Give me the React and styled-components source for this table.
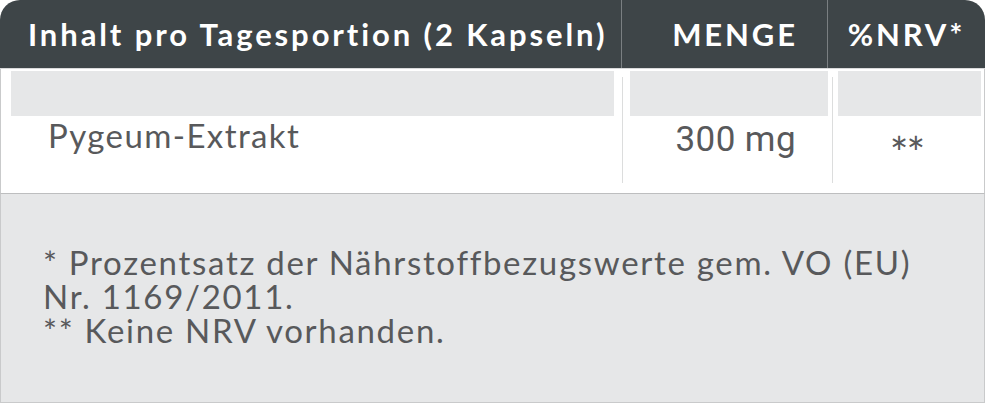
import React from 'react'
import styled, { createGlobalStyle } from 'styled-components'

const GlobalStyle = createGlobalStyle`
  body {
    margin: 0;
    background: #ffffff;
    font-family: Lato, "Noto Sans", sans-serif;
  }
`

const Card = styled.div`
  width: 985px;
  height: 403px;
  box-sizing: border-box;
  display: flex;
  flex-direction: column;
`

const Head = styled.div`
  display: grid;
  grid-template-columns: 621px 206px 1fr;
  height: 68px;
  background: #3e4548;
  border-radius: 20px 20px 0 0;
  border-bottom: 1px solid #d9dadb;
`

const HeadCell = styled.div`
  display: flex;
  align-items: center;
  justify-content: ${(props) => props.align || 'flex-start'};
  padding: ${(props) => props.pad || '0'};
  border-left: ${(props) => (props.divider ? '1px solid #7a7f82' : 'none')};
  color: #ffffff;
  font-family: Lato, "Noto Sans", sans-serif;
  font-weight: 700;
  font-size: 31px;
  letter-spacing: 2.9px;
  white-space: nowrap;
`

const Row = styled.div`
  display: grid;
  grid-template-columns: 621px 206px 1fr;
  height: 124px;
  border-left: 1px solid #c9cacb;
  border-right: 1px solid #c9cacb;
  border-bottom: 1px solid #bdbebf;
  background: #ffffff;
`

const Cell = styled.div`
  display: flex;
  padding-top: 2px;
`

const Rule = styled.div`
  width: 1px;
  margin: ${(props) => props.inset || '6px 0 10px'};
  background: #dcdddd;
`

const Inner = styled.div`
  flex: 1;
  display: flex;
  flex-direction: column;
  margin: ${(props) => props.inset || '0'};
`

const Strip = styled.div`
  height: 45px;
  background: #e6e7e8;
`

const Value = styled.div`
  flex: 1;
  display: flex;
  align-items: flex-start;
  justify-content: ${(props) => props.align || 'flex-start'};
  padding: ${(props) => props.pad || '0'};
  color: #58595b;
  font-family: ${(props) => (props.mono ? 'Roboto, sans-serif' : 'Lato, "Noto Sans", sans-serif')};
  font-size: ${(props) => props.size || '33px'};
  letter-spacing: ${(props) => props.spacing || '0'};
  line-height: 1.2;
  white-space: nowrap;
`

const Foot = styled.div`
  flex: 1;
  display: flex;
  align-items: center;
  padding: 0 0 0 42px;
  background: #e6e7e8;
  border-left: 1px solid #c9cacb;
  border-right: 1px solid #c9cacb;
  border-bottom: 1px solid #c9cacb;
`

const Note = styled.div`
  display: flex;
  flex-direction: column;
  margin-top: -5px;
`

const NoteLine = styled.div`
  height: 34px;
  color: #58595b;
  font-family: Lato, "Noto Sans", sans-serif;
  font-size: 33px;
  letter-spacing: 1.7px;
  line-height: 34px;
  white-space: nowrap;
`

function App() {
  return (
    <Card>
      <GlobalStyle />
      <Head>
        <HeadCell pad="0 0 0 28px">Inhalt pro Tagesportion (2 Kapseln)</HeadCell>
        <HeadCell divider align="flex-end" pad="0 29px 0 0">MENGE</HeadCell>
        <HeadCell divider align="center">%NRV*</HeadCell>
      </Head>

      <Row>
        <Cell>
          <Inner inset="0 8px 0 10px">
            <Strip />
            <Value pad="0 0 0 37px" spacing="1.4px">Pygeum-Extrakt</Value>
          </Inner>
        </Cell>
        <Cell>
          <Rule />
          <Inner inset="0 0 0 7px">
            <Strip />
            <Value mono align="flex-end" pad="3px 32px 0 0" size="35px" spacing="0.4px">300 mg</Value>
          </Inner>
        </Cell>
        <Cell>
          <Rule inset="6px 0 10px 4px" />
          <Inner inset="0 3px 0 5px">
            <Strip />
            <Value align="center" pad="10px 6px 0 0" size="44px" spacing="-2px">**</Value>
          </Inner>
        </Cell>
      </Row>

      <Foot>
        <Note>
          <NoteLine>* Prozentsatz der Nährstoffbezugswerte gem. VO (EU)</NoteLine>
          <NoteLine>Nr. 1169/2011.</NoteLine>
          <NoteLine>** Keine NRV vorhanden.</NoteLine>
        </Note>
      </Foot>
    </Card>
  )
}

export default App
